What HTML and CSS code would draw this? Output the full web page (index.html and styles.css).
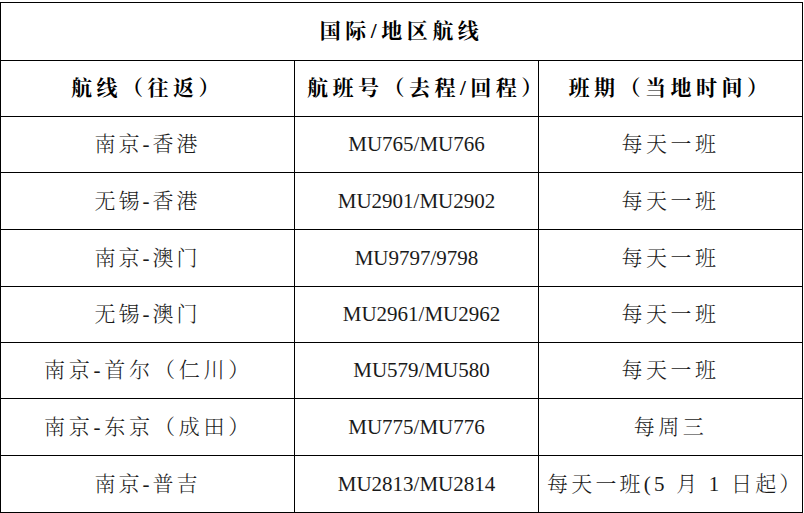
FILE: index.html
```html
<!DOCTYPE html>
<html lang="zh-CN">
<head>
<meta charset="utf-8">
<title>国际/地区航线</title>
<link rel="stylesheet" href="styles.css">
</head>
<body>
<table class="routes">
  <colgroup>
    <col class="c1"><col class="c2"><col class="c3">
  </colgroup>
  <thead>
    <tr class="title-row"><th colspan="3" class="title">国际/地区航线</th></tr>
    <tr class="head-row">
      <th class="head">航线（往返）</th>
      <th class="head head-mid">航班号（去程/回程）</th>
      <th class="head">班期（当地时间）</th>
    </tr>
  </thead>
  <tbody>
    <tr class="r56"><td class="route">南京-香港</td><td class="code">MU765/MU766</td><td class="sched">每天一班</td></tr>
    <tr class="r57"><td class="route">无锡-香港</td><td class="code">MU2901/MU2902</td><td class="sched">每天一班</td></tr>
    <tr class="r57"><td class="route">南京-澳门</td><td class="code">MU9797/9798</td><td class="sched">每天一班</td></tr>
    <tr class="r56"><td class="route">无锡-澳门</td><td class="code shift">MU2961/MU2962</td><td class="sched">每天一班</td></tr>
    <tr class="r56"><td class="route wide">南京-首尔（仁川）</td><td class="code shift">MU579/MU580</td><td class="sched">每天一班</td></tr>
    <tr class="r57"><td class="route wide">南京-东京（成田）</td><td class="code">MU775/MU776</td><td class="sched">每周三</td></tr>
    <tr class="r57"><td class="route">南京-普吉</td><td class="code">MU2813/MU2814</td><td class="sched tight">每天一班(5 月 1 日起）</td></tr>
  </tbody>
</table>
</body>
</html>
```

FILE: styles.css
```css
html, body {
  margin: 0;
  padding: 0;
  background: #ffffff;
}

body {
  padding-top: 2px;
}

.routes {
  border-collapse: collapse;
  table-layout: fixed;
  width: 802px;
  font-family: "Liberation Serif", "Noto Serif CJK SC", "Noto Sans CJK SC", serif;
  color: #1a1a1a;
}

.routes col.c1 { width: 294px; }
.routes col.c2 { width: 244px; }
.routes col.c3 { width: 264px; }

.routes th,
.routes td {
  border: 1px solid #000;
  padding: 0;
  text-align: center;
  vertical-align: middle;
  white-space: nowrap;
  font-size: 21px;
  line-height: 1;
}

.routes td {
  font-weight: 300;
}

.title-row { height: 58px; }
.head-row { height: 56px; }
.r56 { height: 56px; }
.r57 { height: 57px; }

.title,
.head {
  font-weight: bold;
  color: #000;
  letter-spacing: 4.5px;
}

.title {
  padding-left: 4px;
}

.head.head-mid {
  padding-left: 12px;
}

.route {
  letter-spacing: 3px;
  padding-right: 8px;
}

.route.wide {
  letter-spacing: 3.8px;
  padding-right: 0;
  padding-left: 2px;
}

.code {
  font-size: 22px;
  letter-spacing: 0;
}

.code.shift {
  padding-left: 10px;
}

.sched {
  letter-spacing: 3.5px;
}

.sched.tight {
  letter-spacing: 3.2px;
  padding-left: 8px;
}
```
